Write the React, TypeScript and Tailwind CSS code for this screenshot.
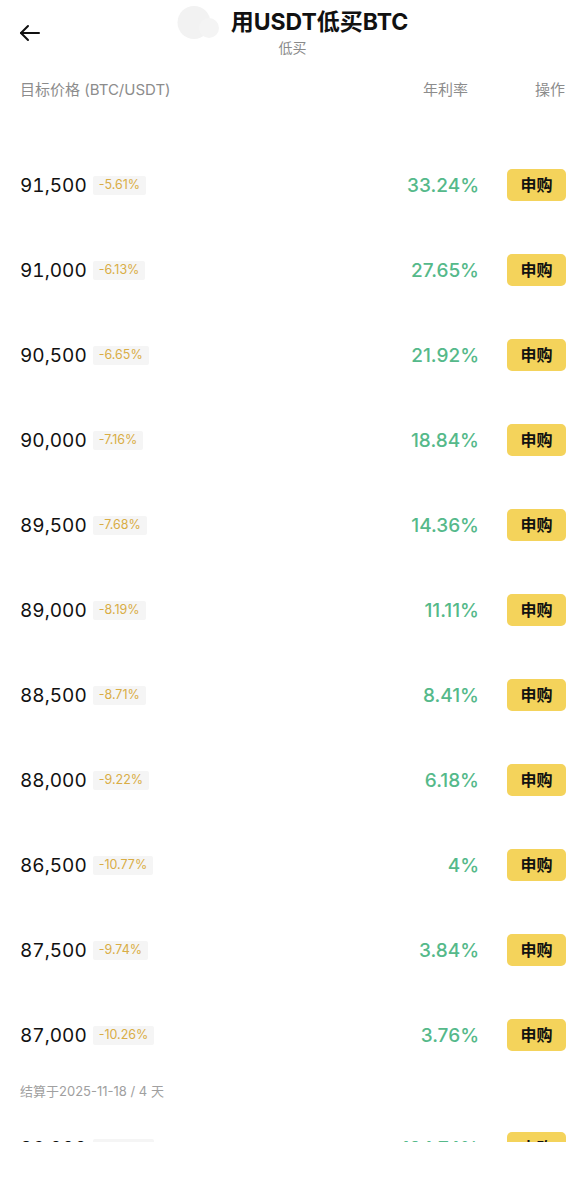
import React from "react";

const rows = [
  ["91,500", "-5.61%", "33.24%"],
  ["91,000", "-6.13%", "27.65%"],
  ["90,500", "-6.65%", "21.92%"],
  ["90,000", "-7.16%", "18.84%"],
  ["89,500", "-7.68%", "14.36%"],
  ["89,000", "-8.19%", "11.11%"],
  ["88,500", "-8.71%", "8.41%"],
  ["88,000", "-9.22%", "6.18%"],
  ["86,500", "-10.77%", "4%"],
  ["87,500", "-9.74%", "3.84%"],
  ["87,000", "-10.26%", "3.76%"],
];

const FONT = { fontFamily: '"Inter", "Noto Sans CJK SC", sans-serif' };

function Row({ price, diff, rate }: { price: string; diff: string; rate: string }) {
  return (
    <div className="flex items-center h-[32px] pl-[20px] pr-[19px]">
      <span className="text-[19px] leading-none tabular-nums text-[#111]">{price}</span>
      <span className="ml-[6px] h-[19px] px-[6px] flex items-center rounded-[2px] bg-[#f5f5f5] text-[12.5px] text-[#d9ad45]">
        {diff}
      </span>
      <div className="flex-1" />
      <span className="text-[19px] leading-none font-medium text-[#55b98a]">{rate}</span>
      <button className="ml-[28px] w-[59px] h-[32px] rounded-[5px] bg-[#f4d35b] text-[16px] font-bold text-[#111] flex items-center justify-center">
        申购
      </button>
    </div>
  );
}

export default function App() {
  return (
    <div className="w-[585px] min-h-[1200px] bg-white" style={FONT}>
      <div className="grid grid-cols-[60px_1fr_60px] h-[66px]">
        <div className="pl-[19px] pt-[23px]">
          <svg width="21" height="20" viewBox="0 0 21 20" fill="none" stroke="#111" strokeWidth="2" strokeLinecap="round" strokeLinejoin="round">
            <path d="M20 10H2" />
            <path d="M9 3L2 10L9 17" />
          </svg>
        </div>
        <div className="flex flex-col items-center pt-[6px]">
          <div className="flex items-center h-[33px]">
            <svg width="42" height="33" viewBox="0 0 42 33">
              <circle cx="17" cy="16.5" r="16.5" fill="#f2f2f2" />
              <circle cx="32" cy="22" r="10" fill="#f4f4f4" />
            </svg>
            <span className="ml-[12px] text-[23px] font-bold text-[#111] leading-none">用USDT低买BTC</span>
          </div>
          <span className="mt-[1px] text-[14px] leading-[16px] text-[#8a8a8a]">低买</span>
        </div>
        <div />
      </div>

      <div className="flex items-center h-[48px] pl-[20px] pr-[20px] text-[15px] text-[#8c8c8c]">
        <span>目标价格 (BTC/USDT)</span>
        <div className="flex-1" />
        <span className="mr-[2px]">年利率</span>
        <span className="ml-[65px]">操作</span>
      </div>

      <div className="flex flex-col gap-[53px] pt-[55px]">
        {rows.map((r, i) => (
          <Row key={i} price={r[0]} diff={r[1]} rate={r[2]} />
        ))}
      </div>

      <div className="mt-[32px] pl-[20px] text-[13px] leading-[16px] text-[#a0a0a0]">结算于2025-11-18 / 4 天</div>

      <div className="mt-[33px] h-[10px] overflow-hidden">
        <Row price="86,000" diff="-10.26%" rate="124.74%" />
      </div>
    </div>
  );
}
